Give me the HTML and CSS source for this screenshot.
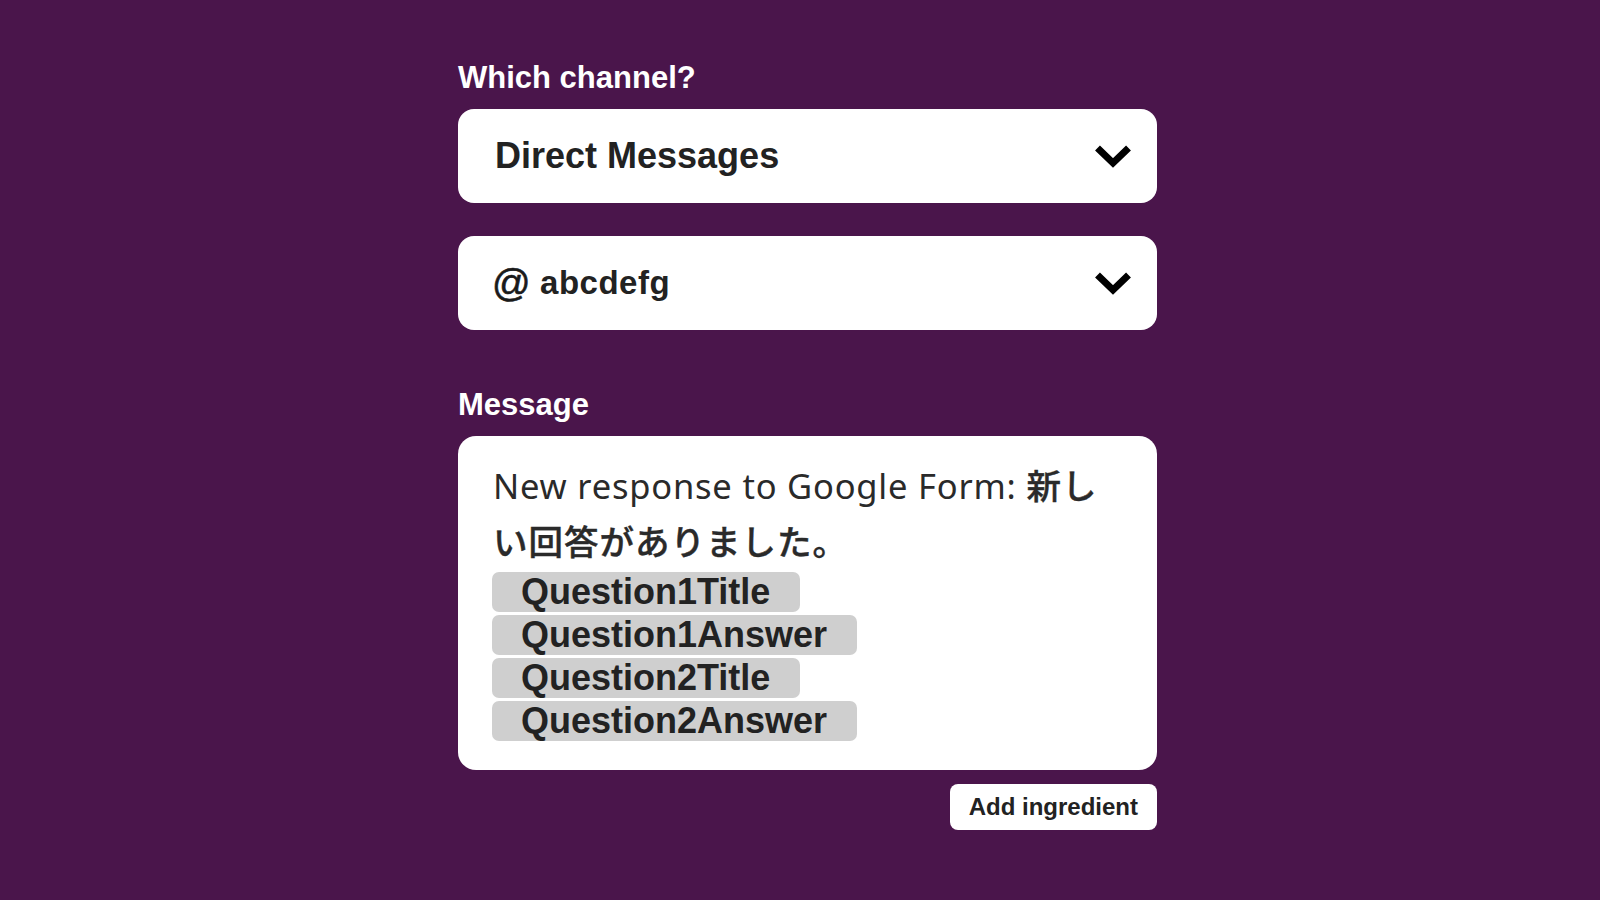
FILE: index.html
```html
<!DOCTYPE html>
<html lang="ja">
<head>
<meta charset="utf-8">
<title>Slack action</title>
<link rel="stylesheet" href="styles.css">
</head>
<body>
<main class="page">
  <section class="form">
    <label class="field-label">Which channel?</label>
    <div class="select">
      <span class="select-text">Direct Messages</span>
      <svg class="chevron" viewBox="0 0 38 28" width="38" height="28" aria-hidden="true"><path d="M3.5 6 L19 21 L34.5 6" /></svg>
    </div>
    <div class="select select-second">
      <span class="select-text select-user"><span class="at">@</span>abcdefg</span>
      <svg class="chevron" viewBox="0 0 38 28" width="38" height="28" aria-hidden="true"><path d="M3.5 6 L19 21 L34.5 6" /></svg>
    </div>

    <label class="field-label field-label-message">Message</label>
    <div class="message">
      <p class="message-text">New response to Google Form: <span class="ja">新しい回答がありました。</span></p>
      <span class="chip">Question1Title</span>
      <span class="chip">Question1Answer</span>
      <span class="chip">Question2Title</span>
      <span class="chip">Question2Answer</span>
    </div>
    <div class="actions">
      <button class="add-btn" type="button">Add ingredient</button>
    </div>
  </section>
</main>
</body>
</html>
```

FILE: styles.css
```css
html, body {
  margin: 0;
  padding: 0;
}
body {
  background: #4a154b;
  width: 1600px;
  height: 900px;
  overflow: hidden;
  font-family: "Liberation Sans", Arial, sans-serif;
}
.page {
  padding: 61px 0 0 458px;
}
.form {
  width: 699px;
  display: flex;
  flex-direction: column;
}
.field-label {
  color: #ffffff;
  font-weight: 700;
  font-size: 31px;
  line-height: 34px;
  margin-bottom: 14px;
}
.field-label-message {
  margin-top: 58px;
  margin-bottom: 14px;
}
.select {
  height: 94px;
  background: #ffffff;
  border-radius: 16px;
  display: flex;
  align-items: center;
  justify-content: space-between;
  padding: 0 25px 0 37px;
  box-sizing: border-box;
}
.select-second {
  margin-top: 33px;
}
.select-text {
  color: #222222;
  font-weight: 700;
  font-size: 36px;
}
.select-user {
  font-size: 33px;
  display: flex;
  align-items: center;
  gap: 9px;
  letter-spacing: 0.5px;
}
.at {
  font-weight: 400;
  font-size: 38px;
  color: #1a1a1a;
  margin-left: -3px;
  -webkit-text-stroke: 0.6px #1a1a1a;
}
.chevron {
  display: block;
}
.chevron path {
  fill: none;
  stroke: #000000;
  stroke-width: 7;
  stroke-linecap: butt;
  stroke-linejoin: miter;
}
.message {
  background: #ffffff;
  border-radius: 18px;
  padding: 21px 37px 29px 34px;
  display: flex;
  flex-direction: column;
  align-items: flex-start;
  gap: 3px;
}
.message-text {
  margin: 0 0 0 1px;
  color: #2a2a2a;
  font-family: "Noto Sans", "Noto Sans CJK JP", sans-serif;
  font-size: 34.5px;
  line-height: 55px;
  letter-spacing: 0.8px;
  width: 622px;
}
.ja {
  font-family: "Noto Sans CJK JP", sans-serif;
  font-weight: 500;
  font-size: 34.5px;
  letter-spacing: 1px;
  -webkit-text-stroke: 0.4px #2a2a2a;
}
.chip {
  display: block;
  background: #cfcfcf;
  color: #222222;
  border-radius: 7px;
  font-weight: 700;
  font-size: 36px;
  line-height: 40px;
  height: 40px;
  padding: 0 30px 0 29px;
}
.actions {
  display: flex;
  justify-content: flex-end;
  margin-top: 14px;
}
.add-btn {
  background: #ffffff;
  border: none;
  border-radius: 8px;
  height: 46px;
  padding: 0 19px;
  color: #222222;
  font-family: "Liberation Sans", Arial, sans-serif;
  font-weight: 700;
  font-size: 24px;
}
```
